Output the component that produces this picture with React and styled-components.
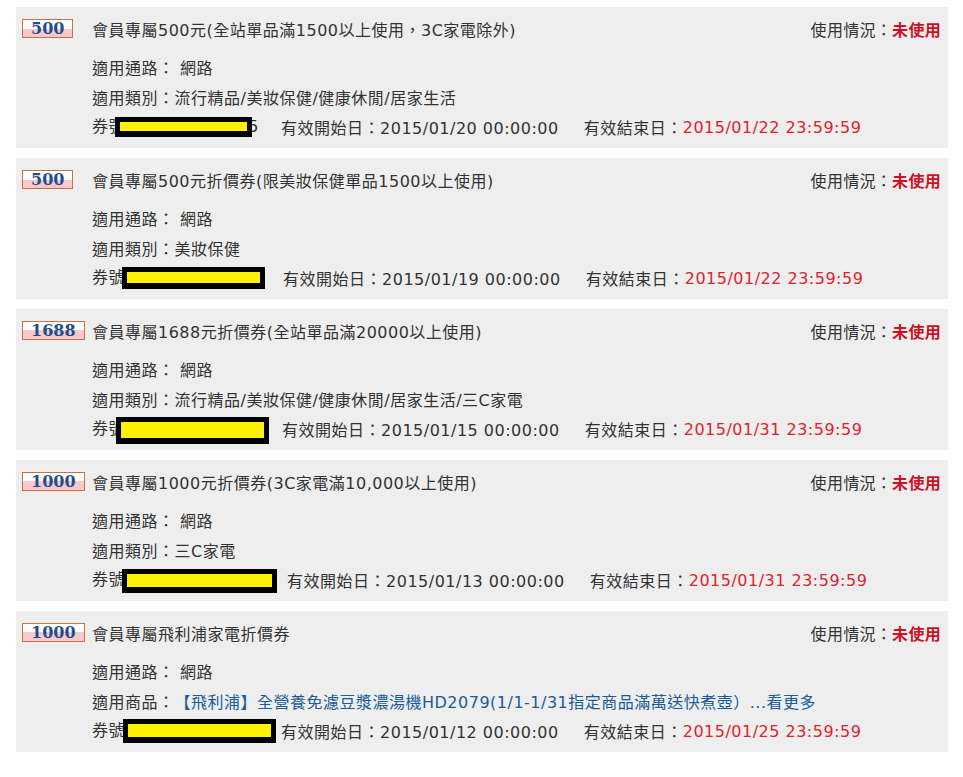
import React from 'react';
import styled, { createGlobalStyle } from 'styled-components';

const coupons = [
  {
    amount: '500',
    title: '會員專屬500元(全站單品滿1500以上使用，3C家電除外)',
    label: '適用類別：',
    scope: '流行精品/美妝保健/健康休閒/居家生活',
    start: '2015/01/20 00:00:00',
    end: '2015/01/22 23:59:59',
    code: { cell: 189, left: 23, width: 137, top: 5, height: 20 },
  },
  {
    amount: '500',
    title: '會員專屬500元折價券(限美妝保健單品1500以上使用)',
    label: '適用類別：',
    scope: '美妝保健',
    start: '2015/01/19 00:00:00',
    end: '2015/01/22 23:59:59',
    code: { cell: 191, left: 30, width: 143, top: 4, height: 22 },
  },
  {
    amount: '1688',
    title: '會員專屬1688元折價券(全站單品滿20000以上使用)',
    label: '適用類別：',
    scope: '流行精品/美妝保健/健康休閒/居家生活/三C家電',
    start: '2015/01/15 00:00:00',
    end: '2015/01/31 23:59:59',
    code: { cell: 190, left: 24, width: 153, top: 3, height: 27 },
  },
  {
    amount: '1000',
    title: '會員專屬1000元折價券(3C家電滿10,000以上使用)',
    label: '適用類別：',
    scope: '三C家電',
    start: '2015/01/13 00:00:00',
    end: '2015/01/31 23:59:59',
    code: { cell: 195, left: 30, width: 155, top: 4, height: 24 },
  },
  {
    amount: '1000',
    title: '會員專屬飛利浦家電折價券',
    label: '適用商品：',
    link: '【飛利浦】全營養免濾豆漿濃湯機HD2079(1/1-1/31指定商品滿萬送快煮壺）...看更多',
    start: '2015/01/12 00:00:00',
    end: '2015/01/25 23:59:59',
    code: { cell: 189, left: 31, width: 153, top: 3, height: 24 },
  },
];

const App = () => {
  return (
    <Page>
      <GlobalStyle />
      {coupons.map((c, i) => (
        <Card key={i}>
          <Header>
            <BadgeCol>
              <Badge>{c.amount}</Badge>
            </BadgeCol>
            <Title>{c.title}</Title>
            <Status>
              使用情況：<Unused>未使用</Unused>
            </Status>
          </Header>
          <Details>
            <Line>適用通路：&nbsp;網路</Line>
            <Line>
              {c.label}
              {c.link ? <Link>{c.link}</Link> : c.scope}
            </Line>
            <Line>
              <CodeCell $width={c.code.cell}>
                券號：00000000005
                <Redact
                  $left={c.code.left}
                  $top={c.code.top}
                  $width={c.code.width}
                  $height={c.code.height}
                />
              </CodeCell>
              有效開始日：{c.start}
              <EndLabel>有效結束日：</EndLabel>
              <RedDate>{c.end}</RedDate>
            </Line>
          </Details>
        </Card>
      ))}
    </Page>
  );
};

export default App;

const GlobalStyle = createGlobalStyle`
  body {
    margin: 0;
    background: #fff;
    font-family: "DejaVu Sans", "Noto Sans CJK TC", sans-serif;
    color: #333;
  }
`;

const Page = styled.div`
  display: flex;
  flex-direction: column;
  gap: 10px;
  padding: 7px 15px 0 16px;
`;

const Card = styled.div`
  background-color: #eeeeee;
  height: 141px;
  box-sizing: border-box;
  padding: 12px 7px 0 6px;
`;

const Header = styled.div`
  display: flex;
  align-items: center;
  height: 19px;
`;

const BadgeCol = styled.div`
  width: 70px;
  flex-shrink: 0;
  display: flex;
`;

const Badge = styled.span`
  display: inline-block;
  box-sizing: border-box;
  height: 19px;
  padding: 0 8px;
  border: 1px solid #c6733d;
  background: linear-gradient(#ffffff 50%, #f8c8cd 50%);
  color: #1d4f8c;
  font-family: "DejaVu Serif", serif;
  font-weight: bold;
  font-size: 16px;
  line-height: 17px;
  text-align: center;
`;

const Title = styled.div`
  flex: 1;
  font-size: 16px;
  letter-spacing: 0.5px;
  white-space: nowrap;
`;

const Status = styled.div`
  font-size: 16px;
  letter-spacing: 0.3px;
  white-space: nowrap;
`;

const Unused = styled.span`
  color: #cc1124;
  font-weight: bold;
`;

const Details = styled.div`
  margin: 14px 0 0 70px;
`;

const Line = styled.div`
  display: flex;
  align-items: center;
  height: 30px;
  font-size: 16px;
  letter-spacing: 0.5px;
  white-space: nowrap;
`;

const Link = styled.span`
  color: #1a5c98;
`;

const CodeCell = styled.span`
  position: relative;
  display: inline-block;
  width: ${(p) => p.$width}px;
  height: 30px;
  line-height: 30px;
  overflow: hidden;
`;

const Redact = styled.span`
  position: absolute;
  left: ${(p) => p.$left}px;
  top: ${(p) => p.$top}px;
  width: ${(p) => p.$width}px;
  height: ${(p) => p.$height}px;
  box-sizing: border-box;
  border: 5px solid #000;
  border-bottom-width: 6px;
  background: #fff200;
`;

const EndLabel = styled.span`
  margin-left: 25px;
`;

const RedDate = styled.span`
  color: #e0222c;
`;
